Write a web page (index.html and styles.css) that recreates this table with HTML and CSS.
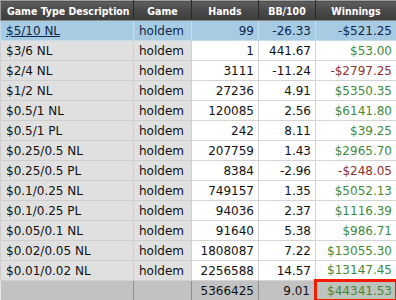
FILE: index.html
```html
<!DOCTYPE html>
<html>
<head>
<meta charset="utf-8">
<link rel="stylesheet" href="styles.css">
</head>
<body>
<table class="grid">
  <colgroup>
    <col class="c1"><col class="c2"><col class="c3"><col class="c4"><col class="c5">
  </colgroup>
  <thead>
    <tr>
      <th class="l">Game Type Description</th>
      <th>Game</th>
      <th>Hands</th>
      <th>BB/100</th>
      <th>Winnings</th>
    </tr>
  </thead>
  <tbody>
    <tr class="sel"><td class="d"><u>$5/10 NL</u></td><td class="g">holdem</td><td class="n">99</td><td class="n">-26.33</td><td class="n">-$521.25</td></tr>
    <tr><td class="d">$3/6 NL</td><td class="g">holdem</td><td class="n">1</td><td class="n">441.67</td><td class="n pos">$53.00</td></tr>
    <tr><td class="d">$2/4 NL</td><td class="g">holdem</td><td class="n">3111</td><td class="n">-11.24</td><td class="n neg">-$2797.25</td></tr>
    <tr><td class="d">$1/2 NL</td><td class="g">holdem</td><td class="n">27236</td><td class="n">4.91</td><td class="n pos">$5350.35</td></tr>
    <tr><td class="d">$0.5/1 NL</td><td class="g">holdem</td><td class="n">120085</td><td class="n">2.56</td><td class="n pos">$6141.80</td></tr>
    <tr><td class="d">$0.5/1 PL</td><td class="g">holdem</td><td class="n">242</td><td class="n">8.11</td><td class="n pos">$39.25</td></tr>
    <tr><td class="d">$0.25/0.5 NL</td><td class="g">holdem</td><td class="n">207759</td><td class="n">1.43</td><td class="n pos">$2965.70</td></tr>
    <tr><td class="d">$0.25/0.5 PL</td><td class="g">holdem</td><td class="n">8384</td><td class="n">-2.96</td><td class="n neg">-$248.05</td></tr>
    <tr><td class="d">$0.1/0.25 NL</td><td class="g">holdem</td><td class="n">749157</td><td class="n">1.35</td><td class="n pos">$5052.13</td></tr>
    <tr><td class="d">$0.1/0.25 PL</td><td class="g">holdem</td><td class="n">94036</td><td class="n">2.37</td><td class="n pos">$1116.39</td></tr>
    <tr><td class="d">$0.05/0.1 NL</td><td class="g">holdem</td><td class="n">91640</td><td class="n">5.38</td><td class="n pos">$986.71</td></tr>
    <tr><td class="d">$0.02/0.05 NL</td><td class="g">holdem</td><td class="n">1808087</td><td class="n">7.22</td><td class="n pos">$13055.30</td></tr>
    <tr><td class="d">$0.01/0.02 NL</td><td class="g">holdem</td><td class="n">2256588</td><td class="n">14.57</td><td class="n pos">$13147.45</td></tr>
  </tbody>
  <tfoot>
    <tr>
      <td></td><td></td><td class="n">5366425</td><td class="n">9.01</td><td class="n pos total">$44341.53</td>
    </tr>
  </tfoot>
</table>
</body>
</html>
```

FILE: styles.css
```css
html, body {
  margin: 0;
  padding: 0;
  background: #ffffff;
}

.grid {
  width: 396px;
  table-layout: fixed;
  border-collapse: collapse;
  font-family: "DejaVu Sans", Verdana, sans-serif;
  font-size: 12px;
  color: #111;
}

.c1 { width: 133px; }
.c2 { width: 58px; }
.c3 { width: 67px; }
.c4 { width: 57px; }
.c5 { width: 81px; }

th {
  height: 20px;
  padding: 0 2px;
  box-sizing: border-box;
  background: linear-gradient(#5e5e5e, #454545 60%, #3e3e3e);
  color: #fff;
  font-family: "DejaVu Sans Condensed", "DejaVu Sans", sans-serif;
  font-stretch: condensed;
  font-size: 10.5px;
  font-weight: bold;
  text-align: center;
  white-space: nowrap;
  overflow: hidden;
  border-left: 1px solid #9a9a9a;
  border-right: 1px solid #2a2a2a;
  border-top: 1px solid #a0a0a0;
  border-bottom: 1px solid #8a8a8a;
}
th.l { text-align: left; padding-left: 6px; }

td {
  height: 20px;
  padding: 0 4px;
  box-sizing: border-box;
  white-space: nowrap;
  overflow: hidden;
  border: 1px solid #d4d4d4;
  background: #fff;
}

td.d, td.g {
  background: #e0e0e0;
  border-color: #cfcfcf;
}
td.d { padding-left: 5px; }
td.g { padding-left: 5px; }

td.n { text-align: right; }

.pos { color: #3f8a3a; }
.neg { color: #8e2f2f; }

tr.sel td {
  background: #a7cbe2;
  color: #10284a;
  border-color: #c4dbe9;
}

tfoot td {
  background: #c2c2c2;
  border-top: 1px solid #d8d8d8;
  border-left: 1px solid #e6e6e6;
  border-right: 1px solid #8e8e8e;
  border-bottom: 1px solid #8e8e8e;
}
tfoot td.total {
  border: 3px solid #f21d00;
  background: #bfc3bd;
  padding-right: 3px;
}
```
